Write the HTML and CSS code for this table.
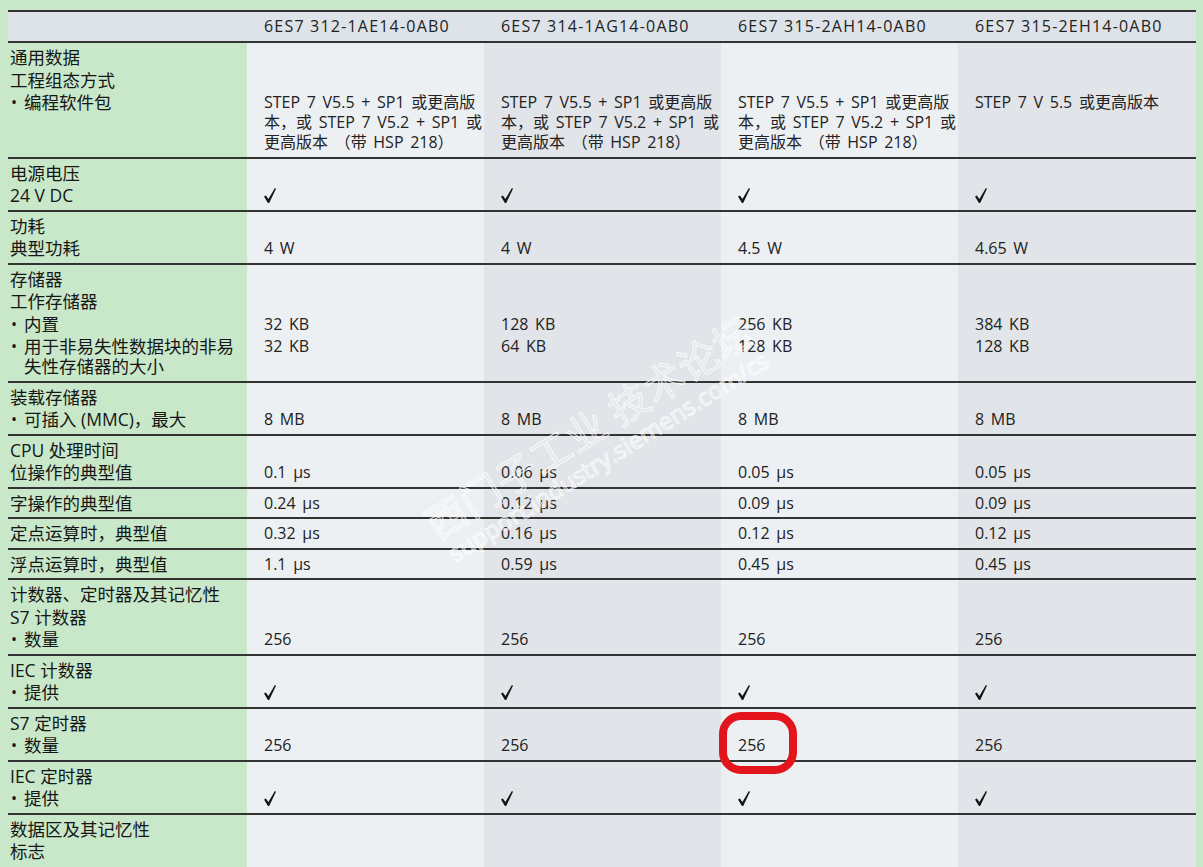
FILE: index.html
```html
<!DOCTYPE html>
<html lang="zh-CN">
<head>
<meta charset="utf-8">
<title>CPU 技术数据</title>
<link rel="stylesheet" href="styles.css">
</head>
<body>
<div class="sheet">
  <div class="row head">
    <div class="cell lab"></div>
    <div class="cell">6ES7 312-1AE14-0AB0</div>
    <div class="cell">6ES7 314-1AG14-0AB0</div>
    <div class="cell">6ES7 315-2AH14-0AB0</div>
    <div class="cell">6ES7 315-2EH14-0AB0</div>
  </div>

  <div class="row">
    <div class="cell lab"><div class="ln">通用数据</div><div class="ln">工程组态方式</div><div class="ln bl"><span class="b">•</span><span>编程软件包</span></div></div>
    <div class="cell c1"><div class="ln"></div><div class="ln"></div><div class="ln">STEP 7 V5.5 + SP1 或更高版<br>本，或 STEP 7 V5.2 + SP1 或<br>更高版本 （带 HSP 218）</div></div>
    <div class="cell c2"><div class="ln"></div><div class="ln"></div><div class="ln">STEP 7 V5.5 + SP1 或更高版<br>本，或 STEP 7 V5.2 + SP1 或<br>更高版本 （带 HSP 218）</div></div>
    <div class="cell c1"><div class="ln"></div><div class="ln"></div><div class="ln">STEP 7 V5.5 + SP1 或更高版<br>本，或 STEP 7 V5.2 + SP1 或<br>更高版本 （带 HSP 218）</div></div>
    <div class="cell c2"><div class="ln"></div><div class="ln"></div><div class="ln">STEP 7 V 5.5 或更高版本</div></div>
  </div>

  <div class="row">
    <div class="cell lab"><div class="ln">电源电压</div><div class="ln">24 V DC</div></div>
    <div class="cell c1"><div class="ln"></div><div class="ln ck"><svg class="tick" viewBox="0 0 12 15" width="12" height="15" aria-label="✓"><path d="M0 8.6 L1.9 7.4 L4.4 11 L10.9 0 L12 0.7 L5.2 15 L3.9 15 Z"/></svg></div></div>
    <div class="cell c2"><div class="ln"></div><div class="ln ck"><svg class="tick" viewBox="0 0 12 15" width="12" height="15" aria-label="✓"><path d="M0 8.6 L1.9 7.4 L4.4 11 L10.9 0 L12 0.7 L5.2 15 L3.9 15 Z"/></svg></div></div>
    <div class="cell c1"><div class="ln"></div><div class="ln ck"><svg class="tick" viewBox="0 0 12 15" width="12" height="15" aria-label="✓"><path d="M0 8.6 L1.9 7.4 L4.4 11 L10.9 0 L12 0.7 L5.2 15 L3.9 15 Z"/></svg></div></div>
    <div class="cell c2"><div class="ln"></div><div class="ln ck"><svg class="tick" viewBox="0 0 12 15" width="12" height="15" aria-label="✓"><path d="M0 8.6 L1.9 7.4 L4.4 11 L10.9 0 L12 0.7 L5.2 15 L3.9 15 Z"/></svg></div></div>
  </div>

  <div class="row">
    <div class="cell lab"><div class="ln">功耗</div><div class="ln">典型功耗</div></div>
    <div class="cell c1"><div class="ln"></div><div class="ln">4 W</div></div>
    <div class="cell c2"><div class="ln"></div><div class="ln">4 W</div></div>
    <div class="cell c1"><div class="ln"></div><div class="ln">4.5 W</div></div>
    <div class="cell c2"><div class="ln"></div><div class="ln">4.65 W</div></div>
  </div>

  <div class="row">
    <div class="cell lab"><div class="ln">存储器</div><div class="ln">工作存储器</div><div class="ln bl"><span class="b">•</span><span>内置</span></div><div class="ln bl"><span class="b">•</span><span>用于非易失性数据块的非易<br>失性存储器的大小</span></div></div>
    <div class="cell c1"><div class="ln"></div><div class="ln"></div><div class="ln">32 KB</div><div class="ln">32 KB</div></div>
    <div class="cell c2"><div class="ln"></div><div class="ln"></div><div class="ln">128 KB</div><div class="ln">64 KB</div></div>
    <div class="cell c1"><div class="ln"></div><div class="ln"></div><div class="ln">256 KB</div><div class="ln">128 KB</div></div>
    <div class="cell c2"><div class="ln"></div><div class="ln"></div><div class="ln">384 KB</div><div class="ln">128 KB</div></div>
  </div>

  <div class="row">
    <div class="cell lab"><div class="ln">装载存储器</div><div class="ln bl"><span class="b">•</span><span>可插入 (MMC)，最大</span></div></div>
    <div class="cell c1"><div class="ln"></div><div class="ln">8 MB</div></div>
    <div class="cell c2"><div class="ln"></div><div class="ln">8 MB</div></div>
    <div class="cell c1"><div class="ln"></div><div class="ln">8 MB</div></div>
    <div class="cell c2"><div class="ln"></div><div class="ln">8 MB</div></div>
  </div>

  <div class="row">
    <div class="cell lab"><div class="ln">CPU 处理时间</div><div class="ln">位操作的典型值</div></div>
    <div class="cell c1"><div class="ln"></div><div class="ln">0.1 µs</div></div>
    <div class="cell c2"><div class="ln"></div><div class="ln">0.06 µs</div></div>
    <div class="cell c1"><div class="ln"></div><div class="ln">0.05 µs</div></div>
    <div class="cell c2"><div class="ln"></div><div class="ln">0.05 µs</div></div>
  </div>

  <div class="row">
    <div class="cell lab"><div class="ln">字操作的典型值</div></div>
    <div class="cell c1"><div class="ln">0.24 µs</div></div>
    <div class="cell c2"><div class="ln">0.12 µs</div></div>
    <div class="cell c1"><div class="ln">0.09 µs</div></div>
    <div class="cell c2"><div class="ln">0.09 µs</div></div>
  </div>

  <div class="row">
    <div class="cell lab"><div class="ln">定点运算时，典型值</div></div>
    <div class="cell c1"><div class="ln">0.32 µs</div></div>
    <div class="cell c2"><div class="ln">0.16 µs</div></div>
    <div class="cell c1"><div class="ln">0.12 µs</div></div>
    <div class="cell c2"><div class="ln">0.12 µs</div></div>
  </div>

  <div class="row">
    <div class="cell lab"><div class="ln">浮点运算时，典型值</div></div>
    <div class="cell c1"><div class="ln">1.1 µs</div></div>
    <div class="cell c2"><div class="ln">0.59 µs</div></div>
    <div class="cell c1"><div class="ln">0.45 µs</div></div>
    <div class="cell c2"><div class="ln">0.45 µs</div></div>
  </div>

  <div class="row">
    <div class="cell lab"><div class="ln">计数器、定时器及其记忆性</div><div class="ln">S7 计数器</div><div class="ln bl"><span class="b">•</span><span>数量</span></div></div>
    <div class="cell c1"><div class="ln"></div><div class="ln"></div><div class="ln">256</div></div>
    <div class="cell c2"><div class="ln"></div><div class="ln"></div><div class="ln">256</div></div>
    <div class="cell c1"><div class="ln"></div><div class="ln"></div><div class="ln">256</div></div>
    <div class="cell c2"><div class="ln"></div><div class="ln"></div><div class="ln">256</div></div>
  </div>

  <div class="row">
    <div class="cell lab"><div class="ln">IEC 计数器</div><div class="ln bl"><span class="b">•</span><span>提供</span></div></div>
    <div class="cell c1"><div class="ln"></div><div class="ln ck"><svg class="tick" viewBox="0 0 12 15" width="12" height="15" aria-label="✓"><path d="M0 8.6 L1.9 7.4 L4.4 11 L10.9 0 L12 0.7 L5.2 15 L3.9 15 Z"/></svg></div></div>
    <div class="cell c2"><div class="ln"></div><div class="ln ck"><svg class="tick" viewBox="0 0 12 15" width="12" height="15" aria-label="✓"><path d="M0 8.6 L1.9 7.4 L4.4 11 L10.9 0 L12 0.7 L5.2 15 L3.9 15 Z"/></svg></div></div>
    <div class="cell c1"><div class="ln"></div><div class="ln ck"><svg class="tick" viewBox="0 0 12 15" width="12" height="15" aria-label="✓"><path d="M0 8.6 L1.9 7.4 L4.4 11 L10.9 0 L12 0.7 L5.2 15 L3.9 15 Z"/></svg></div></div>
    <div class="cell c2"><div class="ln"></div><div class="ln ck"><svg class="tick" viewBox="0 0 12 15" width="12" height="15" aria-label="✓"><path d="M0 8.6 L1.9 7.4 L4.4 11 L10.9 0 L12 0.7 L5.2 15 L3.9 15 Z"/></svg></div></div>
  </div>

  <div class="row">
    <div class="cell lab"><div class="ln">S7 定时器</div><div class="ln bl"><span class="b">•</span><span>数量</span></div></div>
    <div class="cell c1"><div class="ln"></div><div class="ln">256</div></div>
    <div class="cell c2"><div class="ln"></div><div class="ln">256</div></div>
    <div class="cell c1"><div class="ln"></div><div class="ln"><span class="hl">256</span></div></div>
    <div class="cell c2"><div class="ln"></div><div class="ln">256</div></div>
  </div>

  <div class="row">
    <div class="cell lab"><div class="ln">IEC 定时器</div><div class="ln bl"><span class="b">•</span><span>提供</span></div></div>
    <div class="cell c1"><div class="ln"></div><div class="ln ck"><svg class="tick" viewBox="0 0 12 15" width="12" height="15" aria-label="✓"><path d="M0 8.6 L1.9 7.4 L4.4 11 L10.9 0 L12 0.7 L5.2 15 L3.9 15 Z"/></svg></div></div>
    <div class="cell c2"><div class="ln"></div><div class="ln ck"><svg class="tick" viewBox="0 0 12 15" width="12" height="15" aria-label="✓"><path d="M0 8.6 L1.9 7.4 L4.4 11 L10.9 0 L12 0.7 L5.2 15 L3.9 15 Z"/></svg></div></div>
    <div class="cell c1"><div class="ln"></div><div class="ln ck"><svg class="tick" viewBox="0 0 12 15" width="12" height="15" aria-label="✓"><path d="M0 8.6 L1.9 7.4 L4.4 11 L10.9 0 L12 0.7 L5.2 15 L3.9 15 Z"/></svg></div></div>
    <div class="cell c2"><div class="ln"></div><div class="ln ck"><svg class="tick" viewBox="0 0 12 15" width="12" height="15" aria-label="✓"><path d="M0 8.6 L1.9 7.4 L4.4 11 L10.9 0 L12 0.7 L5.2 15 L3.9 15 Z"/></svg></div></div>
  </div>

  <div class="row last">
    <div class="cell lab"><div class="ln">数据区及其记忆性</div><div class="ln">标志</div><div class="ln"></div></div>
    <div class="cell c1"><div class="ln"></div></div>
    <div class="cell c2"><div class="ln"></div></div>
    <div class="cell c1"><div class="ln"></div></div>
    <div class="cell c2"><div class="ln"></div></div>
  </div>

  <div class="watermark" aria-hidden="true">
    <div class="wm-main">西门子工业 技术论坛</div>
    <div class="wm-url">support.industry.siemens.com/cs</div>
  </div>
</div>
</body>
</html>
```

FILE: styles.css
```css
html, body {
  margin: 0;
  padding: 0;
}

body {
  background: #c9e8ca;
  font-family: "Open Sans", "Noto Sans CJK SC", sans-serif;
  font-size: 16px;
  color: #222;
  width: 1203px;
  height: 867px;
  overflow: hidden;
}

.sheet {
  position: relative;
  margin: 10px 0 0 8px;
  width: 1188px;
  border-top: 2px solid #333;
}

.row {
  display: grid;
  grid-template-columns: 239px 237px 237px 237px 238px;
  border-bottom: 2px solid #333;
}

.row.last {
  border-bottom: 0;
}

.cell {
  display: flex;
  flex-direction: column;
  gap: 2.5px;
  padding: 4px 0 4.5px 17px;
  white-space: nowrap;
  word-spacing: 2.5px;
}

.cell.lab {
  padding-left: 2px;
  background: #c9e8ca;
  color: #161616;
  font-size: 17.5px;
  word-spacing: 0;
}

.head .cell {
  background: #dde3e8;
  padding-top: 3px;
  padding-bottom: 4px;
  letter-spacing: 1.2px;
  word-spacing: 0;
}

.head .cell.lab {
  background: #dde3e8;
}

.c1 {
  background: #edf0f3;
}

.c2 {
  background: #e1e4e8;
}

.ln {
  line-height: 20px;
  min-height: 20px;
}

.bl {
  display: flex;
}

.b {
  width: 14px;
  flex: none;
  font-size: 16px;
  padding-left: 1px;
  box-sizing: border-box;
}

.tick {
  display: block;
  margin-top: 3px;
  fill: #151515;
}

.hl {
  position: relative;
}

.hl::after {
  content: "";
  position: absolute;
  left: -19px;
  top: -22px;
  width: 62px;
  height: 46px;
  border: 8px solid #e3141c;
  border-radius: 22px;
}

.watermark {
  position: absolute;
  left: 588px;
  top: 425px;
  transform: translate(-50%, -50%) rotate(-32deg);
  display: flex;
  flex-direction: column;
  align-items: center;
  pointer-events: none;
  white-space: nowrap;
  color: rgba(255, 255, 255, 0.18);
  -webkit-text-stroke: 1px rgba(255, 255, 255, 0.75);
}

.wm-main {
  font-family: "Noto Sans CJK SC", sans-serif;
  font-size: 40px;
  line-height: 46px;
  letter-spacing: 1px;
}

.wm-url {
  font-family: "Open Sans", sans-serif;
  font-size: 24px;
  line-height: 26px;
}
```
